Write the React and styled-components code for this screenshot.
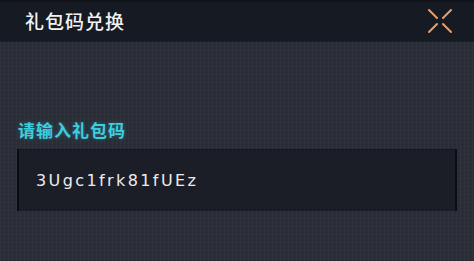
import React from "react";
import styled, { createGlobalStyle } from "styled-components";

const Global = createGlobalStyle`
  html, body { margin: 0; padding: 0; background: #2a2e38; }
  body { width: 474px; height: 261px; overflow: hidden; }
`;

const Panel = styled.div`
  width: 474px;
  height: 261px;
  display: flex;
  flex-direction: column;
  background-color: #2a2e38;
  background-image:
    repeating-linear-gradient(90deg, rgba(255,255,255,0.025) 0 1px, transparent 1px 4px),
    repeating-linear-gradient(0deg, rgba(0,0,0,0.06) 0 1px, transparent 1px 4px);
  font-family: "Noto Sans CJK SC", "Noto Sans", sans-serif;
  overflow: hidden;
`;

const Header = styled.div`
  height: 41px;
  flex: none;
  display: flex;
  align-items: center;
  justify-content: space-between;
  padding: 0 20px 0 25px;
  background: #161a22;
  border-top: 2px solid #0f1217;
  box-sizing: border-box;
  box-shadow: 0 1px 0 rgba(0,0,0,0.35);
`;

const Title = styled.div`
  color: #f2f2f2;
  font-size: 19px;
  font-weight: 500;
  letter-spacing: 1px;
  margin-top: -3px;
`;

const Close = styled.svg`
  width: 28px;
  height: 28px;
  margin-top: -2px;
`;

const Body = styled.div`
  display: flex;
  flex-direction: column;
  padding: 78px 17px 0 17px;
`;

const Label = styled.div`
  color: #3ccfe0;
  font-size: 17px;
  font-weight: 700;
  letter-spacing: 1px;
  padding-left: 1px;
  line-height: 22px;
  text-shadow: 0 0 4px rgba(60, 207, 224, 0.35);
`;

const InputBox = styled.div`
  margin-top: 8px;
  height: 62px;
  width: 440px;
  box-sizing: border-box;
  background: #1b1e27;
  border-left: 2px solid #0b0d11;
  border-right: 2px solid #0b0d11;
  display: flex;
  align-items: center;
  padding-left: 17px;
  box-shadow: inset 0 1px 0 rgba(0,0,0,0.25);
`;

const Code = styled.span`
  font-family: "DejaVu Sans", "Noto Sans", sans-serif;
  color: #ececec;
  font-size: 16px;
  letter-spacing: 2.4px;
  margin-top: 1px;
`;

export default function App() {
  return (
    <>
      <Global />
      <Panel>
        <Header>
          <Title>礼包码兑换</Title>
          <Close viewBox="0 0 28 28">
            <g stroke="#e6a070" strokeWidth="2" strokeLinecap="round">
              <line x1="3" y1="3" x2="11" y2="11" />
              <line x1="25" y1="3" x2="17" y2="11" />
              <line x1="3" y1="25" x2="11" y2="17" />
              <line x1="25" y1="25" x2="17" y2="17" />
            </g>
          </Close>
        </Header>
        <Body>
          <Label>请输入礼包码</Label>
          <InputBox>
            <Code>3Ugc1frk81fUEz</Code>
          </InputBox>
        </Body>
      </Panel>
    </>
  );
}
